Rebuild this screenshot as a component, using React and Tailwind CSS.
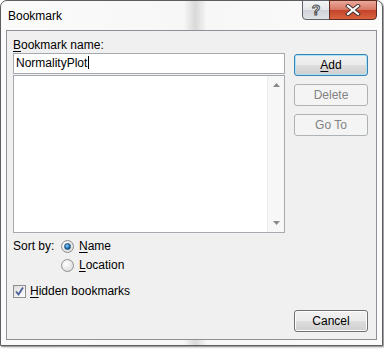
import React from "react";

const font = { fontFamily: '"Liberation Sans", Arial, sans-serif' };

const Key = ({ children }) => <span className="underline underline-offset-2">{children}</span>;

const Button = ({ children, primary, disabled }) => {
  if (disabled) {
    return (
      <div className="flex h-[22px] w-[74px] items-center justify-center rounded-[3px] border border-[#adb2b5] bg-[#f4f4f4] text-[#838383]">
        {children}
      </div>
    );
  }
  return (
    <div
      className={
        "flex h-[22px] w-[74px] items-center justify-center rounded-[3px] border bg-[linear-gradient(#f2f2f2_0%,#ebebeb_50%,#dddddd_51%,#cfcfcf_100%)] text-black " +
        (primary
          ? "border-[#3c7fb1] shadow-[inset_0_0_0_1px_#a6e4fa]"
          : "border-[#707070] shadow-[inset_0_0_0_1px_#fcfcfc]")
      }
    >
      {children}
    </div>
  );
};

const Radio = ({ checked }) => (
  <div className="flex h-[13px] w-[13px] items-center justify-center rounded-full border border-[#8e8f8f] bg-[radial-gradient(circle_at_35%_35%,#ffffff,#d4d4d4)]">
    {checked && (
      <div className="h-[7px] w-[7px] rounded-full border border-[#1b4f79] bg-[radial-gradient(circle_at_40%_35%,#8fd2ff,#1a6fb3_60%,#0a3d6b)]" />
    )}
  </div>
);

const Checkbox = () => (
  <div className="flex h-[13px] w-[13px] items-center justify-center border border-[#8e8f8f] bg-[linear-gradient(135deg,#dcdcdc,#ffffff)]">
    <svg width="11" height="11" viewBox="0 0 11 11">
      <path d="M2 5.5 L4.5 8.5 L9 1.5" fill="none" stroke="#4a5f97" strokeWidth="1.8" />
    </svg>
  </div>
);

export default function App() {
  return (
    <div className="h-[349px] w-[384px] overflow-hidden bg-white text-[12px] text-black" style={font}>
      <div className="relative h-[346px] w-[383px] rounded-t-[7px] border border-[#5c5e62] bg-[linear-gradient(90deg,#fbfbfb_0%,#f7f7f7_48%,#d9d9d9_51%,#f7f7f7_54%,#fbfbfb_100%)] px-[5px] pb-[6px] shadow-[1px_1px_2px_rgba(0,0,0,0.5)]">
        <div className="flex h-[29px] items-center pl-[2px] text-[12px]">Bookmark</div>

        <div className="absolute right-[5px] top-[-1px] flex h-[20px]">
          <div className="flex w-[28px] items-center justify-center rounded-bl-[4px] border border-[#5f6369] bg-[linear-gradient(#f4f5f7_0%,#e4e6ea_50%,#cfd3d9_51%,#dfe2e6_100%)] text-[14px] font-bold text-white [-webkit-text-stroke:1px_#4f5256]">
            ?
          </div>
          <div className="ml-[-1px] flex w-[48px] items-center justify-center rounded-br-[4px] border border-[#5f2a22] bg-[linear-gradient(#e9a99a_0%,#d77563_50%,#c4432a_51%,#d9643f_100%)]">
            <svg width="16" height="12" viewBox="0 0 16 12">
              <path d="M3 2 L13 10 M13 2 L3 10" stroke="#3b2f2f" strokeWidth="4" strokeLinecap="square" />
              <path d="M3 2 L13 10 M13 2 L3 10" stroke="#ffffff" strokeWidth="2.2" strokeLinecap="square" />
            </svg>
          </div>
        </div>

        <div className="flex h-[310px] gap-[9px] border border-[#8c9198] bg-[#f0f0f0] px-[6px] pb-[7px] pt-[6px]">
          <div className="flex w-[272px] flex-col">
            <div className="h-[16px] leading-[16px]">
              <Key>B</Key>ookmark name:
            </div>
            <div className="h-[21px] border border-[#a5a9b0] bg-white pl-[2px] leading-[19px]">
              NormalityPlot<span className="ml-[1px] inline-block h-[13px] w-[1px] translate-y-[2px] bg-black" />
            </div>
            <div className="mt-[1px] flex h-[158px] border border-[#a5a9b0] bg-white">
              <div className="flex-1" />
              <div className="flex w-[17px] flex-col items-center justify-between border-l border-[#ececec] bg-[#f7f7f7] py-[7px]">
                <svg width="7" height="4" viewBox="0 0 7 4">
                  <path d="M3.5 0 L7 4 L0 4 Z" fill="#8a8a8a" />
                </svg>
                <svg width="7" height="4" viewBox="0 0 7 4">
                  <path d="M0 0 L7 0 L3.5 4 Z" fill="#8a8a8a" />
                </svg>
              </div>
            </div>
            <div className="mt-[5px] flex items-start">
              <div className="w-[48px] leading-[16px]">Sort by:</div>
              <div className="flex flex-col gap-[3px]">
                <div className="flex h-[16px] items-center gap-[5px]">
                  <Radio checked />
                  <span>
                    <Key>N</Key>ame
                  </span>
                </div>
                <div className="flex h-[16px] items-center gap-[5px]">
                  <Radio />
                  <span>
                    <Key>L</Key>ocation
                  </span>
                </div>
              </div>
            </div>
            <div className="mt-[10px] flex h-[16px] items-center gap-[4px]">
              <Checkbox />
              <span>
                <Key>H</Key>idden bookmarks
              </span>
            </div>
          </div>

          <div className="flex flex-col pt-[17px]">
            <div className="flex flex-col gap-[8px]">
              <Button primary>
                <Key>A</Key>dd
              </Button>
              <Button disabled>Delete</Button>
              <Button disabled>Go To</Button>
            </div>
            <div className="mt-auto">
              <Button>Cancel</Button>
            </div>
          </div>
        </div>
      </div>
    </div>
  );
}
